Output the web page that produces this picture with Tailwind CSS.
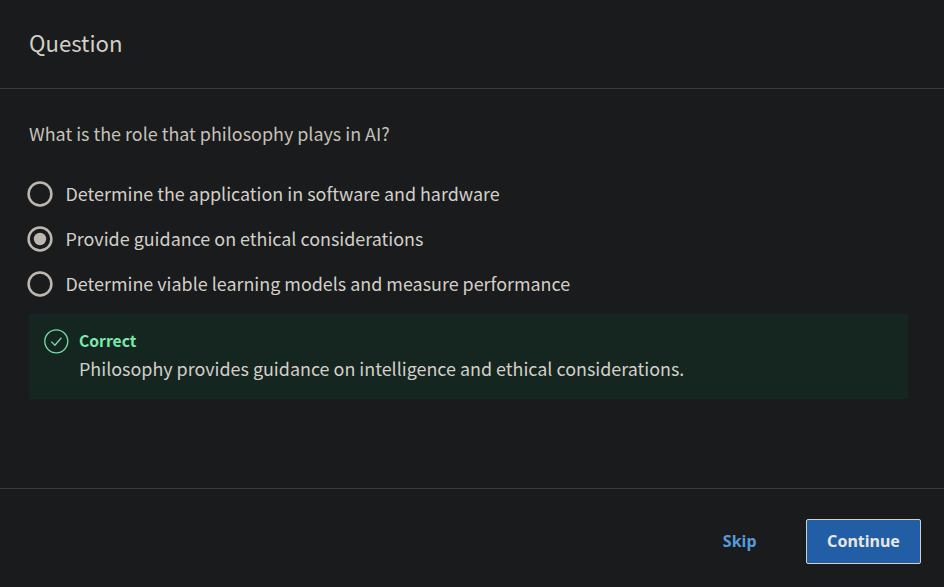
<!DOCTYPE html>
<html lang="en">
<head>
<meta charset="utf-8">
<title>Question</title>
<script src="https://cdn.jsdelivr.net/npm/@tailwindcss/browser@4"></script>
</head>
<body class="flex h-[587px] w-[944px] flex-col overflow-hidden bg-[#1a1b1c] font-['Noto_Sans_CJK_SC',sans-serif] text-[17.92px] leading-7 text-[#d3cfc9]">
  <header class="flex h-[89px] shrink-0 items-center border-b border-[#37393b] pb-[4px] pl-[29px]">
    <h1 class="text-[22.2px] leading-8">Question</h1>
  </header>
  <main class="flex-1 pr-9 pl-[29px] pt-[30px]">
    <p class="mb-[24px] h-7 text-[#c6c1b9]">What is the role that philosophy plays in AI?</p>
    <ul class="-ml-[2px]">
      <li class="flex h-[45px] items-center gap-[12.5px]">
        <svg class="size-[26px] shrink-0" viewBox="0 0 26 26" fill="none" stroke="#bdb7af" stroke-width="2.5"><circle cx="13" cy="13" r="11.4"/></svg>
        <span class="pb-[2px]">Determine the application in software and hardware</span>
      </li>
      <li class="flex h-[45px] items-center gap-[12.5px]">
        <svg class="size-[26px] shrink-0" viewBox="0 0 26 26" fill="none" stroke="#bdb7af" stroke-width="2.5"><circle cx="13" cy="13" r="11.4"/><circle cx="13" cy="13" r="6.2" fill="#bdb7af" stroke="none"/></svg>
        <span class="pb-[2px]">Provide guidance on ethical considerations</span>
      </li>
      <li class="flex h-[45px] items-center gap-[12.5px]">
        <svg class="size-[26px] shrink-0" viewBox="0 0 26 26" fill="none" stroke="#bdb7af" stroke-width="2.5"><circle cx="13" cy="13" r="11.4"/></svg>
        <span class="pb-[2px]">Determine viable learning models and measure performance</span>
      </li>
    </ul>
    <section class="mt-2 flex h-[85px] gap-[10px] bg-[#152620] pt-[13px] pl-[15px]">
      <svg class="mt-[2px] size-[25px] shrink-0" viewBox="0 0 25 25" fill="none" stroke="#72dea4" stroke-width="1.3"><circle cx="12.3" cy="12.3" r="11.5"/><path d="M7.3 12.6 10.9 16.2 17.4 8.8"/></svg>
      <div>
        <h2 class="h-[27px] text-[15.7px] font-bold text-[#7be8ad]">Correct</h2>
        <p>Philosophy provides guidance on intelligence and ethical considerations.</p>
      </div>
    </section>
  </main>
  <footer class="flex h-[99px] shrink-0 items-start justify-end gap-[28px] border-t border-[#37393b] pt-[30px] pr-[23px] font-['Noto_Sans',sans-serif] text-[16px] font-bold">
    <button class="h-[45px] px-[21.5px] pb-[2px] text-[#569ade]">Skip</button>
    <button class="h-[45px] w-[115px] rounded-[2px] border border-[#d3cfc9] bg-[#225ea6] pb-[2px] text-[#e8e6e3]">Continue</button>
  </footer>
</body>
</html>
